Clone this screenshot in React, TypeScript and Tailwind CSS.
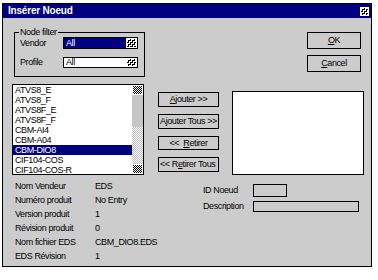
import React from 'react';

const items = ['ATVS8_E', 'ATVS8_F', 'ATVS8F_E', 'ATVS8F_F', 'CBM-AI4', 'CBM-A04', 'CBM-DIO8', 'CIF104-COS', 'CIF104-COS-R'];

const info: [string, string][] = [
  ['Nom Vendeur', 'EDS'],
  ['Numéro produit', 'No Entry'],
  ['Version produit', '1'],
  ['Révision produit', '0'],
  ['Nom fichier EDS', 'CBM_DIO8.EDS'],
  ['EDS Révision', '1'],
];

// little dithered bitmap used by the old win3 style arrows
function Dither({ w, h, dense }: { w: number; h: number; dense?: boolean }) {
  const cells: JSX.Element[] = [];
  for (let y = 1; y < h - 1; y++) {
    for (let x = 1; x < w - 1; x++) {
      const on = dense ? (x + y) % 2 === 0 : (x % 2 === 0 && y % 2 === 0) || (x + y) % 4 === 1;
      if (on) cells.push(<rect key={`${x}-${y}`} x={x} y={y} width={1} height={1} fill="#000" />);
    }
  }
  return (
    <svg width={w} height={h} viewBox={`0 0 ${w} ${h}`} shapeRendering="crispEdges" className="block">
      <rect x={0} y={0} width={w} height={h} fill="#fff" />
      {cells}
    </svg>
  );
}

function Btn({ children, className = '' }: { children: React.ReactNode; className?: string }) {
  return (
    <div className={`flex items-center justify-center border border-black bg-[#cccccc] text-black ${className}`}>
      {children}
    </div>
  );
}

export default function App() {
  return (
    <div className="w-[378px] h-[280px] bg-white font-['Liberation_Sans',Arial,sans-serif] text-[9px] tracking-[-0.4px] text-black leading-none">
      <div className="ml-[2px] mt-[3px] w-[370px] h-[264px] border border-black bg-[#cccccc] flex flex-col">
        {/* title bar */}
        <div className="h-[14px] bg-[#000080] flex items-center justify-between pl-[5px] pr-[2px]">
          <span className="text-white font-bold text-[10px] tracking-[-0.2px]">Insérer Noeud</span>
          <Dither w={9} h={9} />
        </div>

        {/* top: filter + ok/cancel */}
        <div className="flex mt-[14px] ml-[11px]">
          <div className="relative w-[131px] h-[45px] border border-black">
            <span className="absolute -top-[5px] left-[4px] bg-[#cccccc] px-[1px]">Node filter</span>
            <div className="flex items-center mt-[4px]">
              <span className="w-[48px] pl-[5px]">Vendor</span>
              <div className="w-[75px] h-[12px] border border-black bg-[#000080] flex items-center justify-between">
                <span className="text-white pl-[2px]">All</span>
                <Dither w={11} h={10} />
              </div>
            </div>
            <div className="flex items-center mt-[8px]">
              <span className="w-[48px] pl-[5px]">Profile</span>
              <div className="w-[75px] h-[11px] border border-black bg-white flex items-center justify-between">
                <span className="pl-[2px]">All</span>
                <Dither w={11} h={9} />
              </div>
            </div>
          </div>
          <div className="ml-[162px] flex flex-col gap-[6px]">
            <Btn className="w-[54px] h-[17px]"><span><u>O</u>K</span></Btn>
            <Btn className="w-[54px] h-[17px]"><span><u>C</u>ancel</span></Btn>
          </div>
        </div>

        {/* middle: lists and move buttons */}
        <div className="flex mt-[7px] ml-[9px]">
          <div className="w-[132px] h-[91px] border border-black bg-white flex">
            <div className="flex-1 overflow-hidden">
              {items.map((it) => (
                <div
                  key={it}
                  className={`h-[10px] flex items-center pl-[2px] ${it === 'CBM-DIO8' ? 'bg-[#000080] text-white' : ''}`}
                >
                  {it}
                </div>
              ))}
            </div>
            <div className="w-[11px] flex flex-col bg-[repeating-conic-gradient(#bdbdbd_0_25%,#ffffff_0_50%)] bg-[length:2px_2px]">
              <Dither w={11} h={10} dense />
              <div className="h-[32px] bg-[#c6c6c6]" />
              <div className="flex-1" />
              <Dither w={11} h={10} dense />
            </div>
          </div>

          <div className="ml-[14px] mt-[8px] flex flex-col gap-[7px]">
            <Btn className="w-[61px] h-[15px]"><span><u>A</u>jouter &gt;&gt;</span></Btn>
            <Btn className="w-[61px] h-[15px]"><span>Ajouter Tous &gt;&gt;</span></Btn>
            <Btn className="w-[61px] h-[14px]"><span>&lt;&lt;&nbsp; <u>R</u>etirer</span></Btn>
            <Btn className="w-[61px] h-[15px] justify-start pl-[1px]"><span>&lt;&lt; R<u>e</u>tirer Tous</span></Btn>
          </div>

          <div className="ml-[13px] mt-[7px] w-[132px] h-[84px] border border-black bg-white" />
        </div>

        {/* bottom: product info */}
        <div className="flex mt-[4px] ml-[12px]">
          <div className="w-[188px] flex flex-col">
            {info.map(([k, v]) => (
              <div key={k} className="h-[14px] flex items-center">
                <span className="w-[80px]">{k}</span>
                <span>{v}</span>
              </div>
            ))}
          </div>
          <div className="flex flex-col mt-[5px]">
            <div className="flex items-center">
              <span className="w-[50px]">ID Noeud</span>
              <div className="w-[34px] h-[13px] border border-black" />
            </div>
            <div className="flex items-center mt-[4px]">
              <span className="w-[50px]">Description</span>
              <div className="w-[106px] h-[11px] border border-black" />
            </div>
          </div>
        </div>
      </div>
    </div>
  );
}
